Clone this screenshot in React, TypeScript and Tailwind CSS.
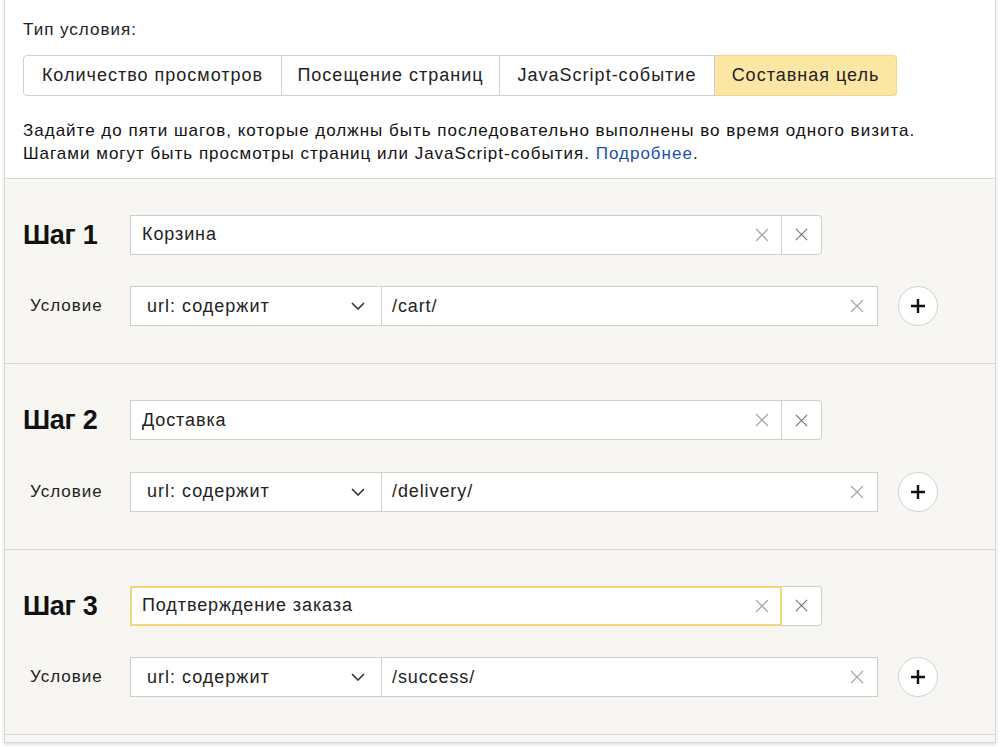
import React from 'react';

const font = { fontFamily: '"Liberation Sans", Arial, sans-serif' };

function Cross({ className }: { className?: string }) {
  return (
    <svg className={className} viewBox="0 0 16 16" fill="none" stroke="currentColor" strokeWidth="1.3">
      <path d="M2 2l12 12M14 2L2 14" />
    </svg>
  );
}

function Chevron({ className }: { className?: string }) {
  return (
    <svg className={className} viewBox="0 0 14 8" fill="none" stroke="currentColor" strokeWidth="1.6">
      <path d="M1 1l6 6 6-6" />
    </svg>
  );
}

interface Step {
  n: number;
  name: string;
  value: string;
  focused?: boolean;
}

const steps: Step[] = [
  { n: 1, name: 'Корзина', value: '/cart/' },
  { n: 2, name: 'Доставка', value: '/delivery/' },
  { n: 3, name: 'Подтверждение заказа', value: '/success/', focused: true },
];

const tabs = ['Количество просмотров', 'Посещение страниц', 'JavaScript-событие', 'Составная цель'];
const tabWidths = ['w-[259px]', 'w-[218px]', 'w-[215px]', 'w-[182px]'];

function StepBlock({ step }: { step: Step }) {
  return (
    <div className="border-b border-[#dcdbd7] pl-[18px] pt-[36px] pb-[37px]">
      <div className="flex items-center">
        <div className="w-[107px] text-[27px] font-bold text-[#111] tracking-[-0.3px]">Шаг {step.n}</div>
        <div
          className={
            step.focused
              ? 'flex h-[40px] w-[652px] items-center bg-white border-2 border-[#f1d77a] pl-[10px] pr-[10px]'
              : 'flex h-[40px] w-[652px] items-center bg-white border border-[#cfcfcf] pl-[11px] pr-[11px]'
          }
        >
          <span className="flex-1 text-[18px] tracking-[0.9px] text-[#222]">{step.name}</span>
          <Cross className="h-[16px] w-[16px] text-[#a8a8a8]" />
        </div>
        <div className="flex h-[40px] w-[40px] items-center justify-center rounded-r-[4px] border border-l-0 border-[#cfcfcf] bg-white">
          <Cross className="h-[15px] w-[15px] text-[#777]" />
        </div>
      </div>
      <div className="mt-[31px] flex items-center">
        <div className="w-[107px] pl-[7px] text-[17px] tracking-[1px] text-[#222]">Условие</div>
        <div className="flex h-[40px] w-[252px] items-center border border-[#cfcfcf] bg-white pl-[16px] pr-[16px]">
          <span className="flex-1 text-[18px] tracking-[1px] text-[#222]">url: содержит</span>
          <Chevron className="h-[8px] w-[14px] text-[#333]" />
        </div>
        <div className="flex h-[40px] w-[496px] items-center border border-l-0 border-[#cfcfcf] bg-white pl-[10px] pr-[12px]">
          <span className="flex-1 text-[18px] tracking-[0.9px] text-[#222]">{step.value}</span>
          <Cross className="h-[16px] w-[16px] text-[#a8a8a8]" />
        </div>
        <div className="ml-[20px] flex h-[40px] w-[40px] items-center justify-center rounded-full border border-[#d2d2d2] bg-white">
          <svg className="h-[18px] w-[18px] text-[#111]" viewBox="0 0 18 18" fill="none" stroke="currentColor" strokeWidth="2.4">
            <path d="M9 2v14M2 9h14" />
          </svg>
        </div>
      </div>
    </div>
  );
}

export default function App() {
  return (
    <div className="h-[747px] w-[1000px] bg-white pl-[4px] pr-[4px]" style={font}>
      <div className="border-x border-b border-[#d6d6d6] shadow-[0_2px_3px_rgba(0,0,0,0.12)]">
        <div className="bg-white pl-[18px] pt-[17px] pb-[13px] border-b border-[#dcdbd7]">
          <div className="text-[17px] tracking-[1px] text-[#222]">Тип условия:</div>
          <div className="mt-[12px] flex h-[41px]">
            {tabs.map((t, i) => {
              const active = i === tabs.length - 1;
              return (
                <div
                  key={t}
                  className={[
                    'flex items-center justify-center text-[18px] tracking-[1px] text-[#222]',
                    tabWidths[i],
                    active ? 'bg-[#fce6a3] border border-[#f0d68a] rounded-r-[4px]' : 'border border-[#d0d0d0] bg-white',
                    i > 0 && !active ? 'border-l-0' : '',
                    i === 0 ? 'rounded-l-[4px]' : '',
                    active ? 'border-l-0' : '',
                  ].join(' ')}
                >
                  {t}
                </div>
              );
            })}
          </div>
          <p className="mt-[23px] text-[17px] tracking-[1px] leading-[23px] text-[#111]">
            Задайте до пяти шагов, которые должны быть последовательно выполнены во время одного визита.
            <br />
            Шагами могут быть просмотры страниц или JavaScript-события.{' '}
            <span className="text-[#1b4fa8]">Подробнее</span>.
          </p>
        </div>
        <div className="bg-[#f7f6f2]">
          {steps.map((s) => (
            <StepBlock key={s.n} step={s} />
          ))}
          <div className="h-[7px]" />
        </div>
      </div>
    </div>
  );
}
